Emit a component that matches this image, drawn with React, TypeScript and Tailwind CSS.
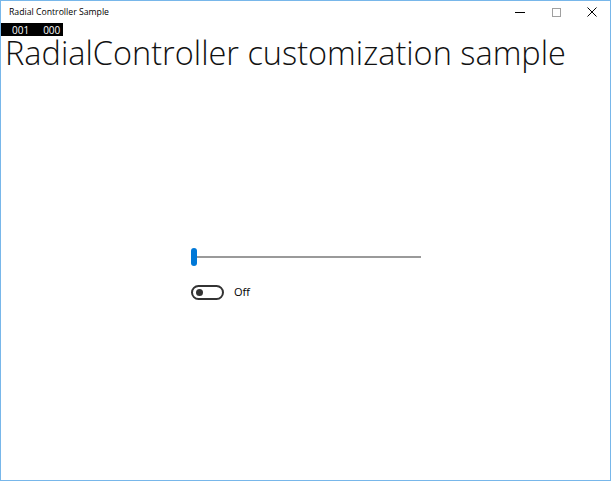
const ui = { fontFamily: '"Open Sans", "Noto Sans", sans-serif' };

function TitleBar() {
  return (
    <div className="flex h-[22px] items-center justify-between">
      <span className="pl-[8px] pt-[1px] text-[8.7px] text-black">Radial Controller Sample</span>
      <div className="flex h-full items-center">
        <div className="flex w-[36px] justify-center">
          <div className="h-px w-[10px] bg-black" />
        </div>
        <div className="flex w-[36px] justify-center">
          <div className="h-[9px] w-[9px] border border-[#a0a0a0]" />
        </div>
        <div className="flex w-[36px] justify-center">
          <svg width="10" height="10" viewBox="0 0 10 10">
            <path d="M0.5 0.5L9.5 9.5M9.5 0.5L0.5 9.5" stroke="#000" strokeWidth="1" />
          </svg>
        </div>
      </div>
    </div>
  );
}

export default function App() {
  return (
    <div
      className="flex h-[481px] w-[611px] flex-col border border-[#78b7ea] bg-white"
      style={ui}
    >
      <TitleBar />
      <div className="flex h-[13px] w-[62px] items-center gap-[14px] bg-black pl-[11px] text-[10px] leading-none text-white">
        <span>001</span>
        <span>000</span>
      </div>
      <h1 className="pl-[4px] text-[32.5px] leading-[33px] font-light text-[#111]">
        RadialController customization sample
      </h1>

      <div className="mt-[179px] flex flex-col pl-[190px]">
        <div className="flex h-[18px] w-[230px] items-center">
          <div className="h-[18px] w-[6px] rounded-full bg-[#0078d7]" />
          <div className="h-[2px] flex-1 bg-[#9a9a9a]" />
        </div>
        <div className="mt-[18px] flex items-center gap-[10px]">
          <div className="flex h-[15px] w-[33px] items-center rounded-full border-2 border-[#333] pl-[3px]">
            <div className="h-[7px] w-[7px] rounded-full bg-[#333]" />
          </div>
          <span className="text-[11px] text-black">Off</span>
        </div>
      </div>
    </div>
  );
}
